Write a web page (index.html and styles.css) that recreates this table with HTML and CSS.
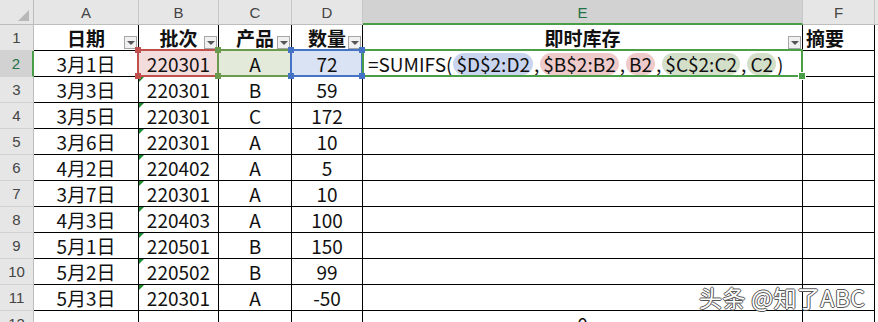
FILE: index.html
```html
<!DOCTYPE html>
<html lang="zh">
<head>
<meta charset="utf-8">
<link rel="stylesheet" href="styles.css">
</head>
<body>
<div class="sheet">
  <!-- column header row -->
  <div class="corner"><span class="corner-tri"></span></div>
  <div class="colh">A</div>
  <div class="colh">B</div>
  <div class="colh">C</div>
  <div class="colh">D</div>
  <div class="colh colh-sel">E</div>
  <div class="colh">F</div>
  <div class="colh colh-rest"></div>

  <!-- row 1 -->
  <div class="rowh">1</div>
  <div class="c hd">日期<span class="dd"></span></div>
  <div class="c hd">批次<span class="dd"></span></div>
  <div class="c hd">产品<span class="dd"></span></div>
  <div class="c hd">数量<span class="dd"></span></div>
  <div class="c hd">即时库存<span class="dd"></span></div>
  <div class="c hd left">摘要</div>
  <div class="c rest"></div>

  <!-- row 2 -->
  <div class="rowh rowh-sel">2</div>
  <div class="c">3月1日</div>
  <div class="c ref ref-red">220301<i class="h tl"></i><i class="h tr"></i><i class="h bl"></i><i class="h br"></i></div>
  <div class="c ref ref-green">A<i class="h tl"></i><i class="h tr"></i><i class="h bl"></i><i class="h br"></i></div>
  <div class="c ref ref-blue">72<i class="h tl"></i><i class="h tr"></i><i class="h bl"></i><i class="h br"></i></div>
  <div class="c edit"><span class="formula">=SUMIFS(<span class="pill p-blue">$D$2:D2</span>,<span class="pill p-red">$B$2:B2</span>,<span class="pill p-red">B2</span>,<span class="pill p-green">$C$2:C2</span>,<span class="pill p-green">C2</span>)</span><i class="fill-handle"></i></div>
  <div class="c"></div>
  <div class="c rest"></div>

  <!-- row 3 -->
  <div class="rowh">3</div>
  <div class="c">3月3日</div>
  <div class="c txt">220301</div>
  <div class="c">B</div>
  <div class="c">59</div>
  <div class="c"></div>
  <div class="c"></div>
  <div class="c rest"></div>

  <div class="rowh">4</div>
  <div class="c">3月5日</div>
  <div class="c txt">220301</div>
  <div class="c">C</div>
  <div class="c">172</div>
  <div class="c"></div>
  <div class="c"></div>
  <div class="c rest"></div>

  <div class="rowh">5</div>
  <div class="c">3月6日</div>
  <div class="c txt">220301</div>
  <div class="c">A</div>
  <div class="c">10</div>
  <div class="c"></div>
  <div class="c"></div>
  <div class="c rest"></div>

  <div class="rowh">6</div>
  <div class="c">4月2日</div>
  <div class="c txt">220402</div>
  <div class="c">A</div>
  <div class="c">5</div>
  <div class="c"></div>
  <div class="c"></div>
  <div class="c rest"></div>

  <div class="rowh">7</div>
  <div class="c">3月7日</div>
  <div class="c txt">220301</div>
  <div class="c">A</div>
  <div class="c">10</div>
  <div class="c"></div>
  <div class="c"></div>
  <div class="c rest"></div>

  <div class="rowh">8</div>
  <div class="c">4月3日</div>
  <div class="c txt">220403</div>
  <div class="c">A</div>
  <div class="c">100</div>
  <div class="c"></div>
  <div class="c"></div>
  <div class="c rest"></div>

  <div class="rowh">9</div>
  <div class="c">5月1日</div>
  <div class="c txt">220501</div>
  <div class="c">B</div>
  <div class="c">150</div>
  <div class="c"></div>
  <div class="c"></div>
  <div class="c rest"></div>

  <div class="rowh">10</div>
  <div class="c">5月2日</div>
  <div class="c txt">220502</div>
  <div class="c">B</div>
  <div class="c">99</div>
  <div class="c"></div>
  <div class="c"></div>
  <div class="c rest"></div>

  <div class="rowh">11</div>
  <div class="c">5月3日</div>
  <div class="c txt">220301</div>
  <div class="c">A</div>
  <div class="c">-50</div>
  <div class="c"></div>
  <div class="c"></div>
  <div class="c rest"></div>

  <div class="rowh">12</div>
  <div class="c"></div>
  <div class="c"></div>
  <div class="c"></div>
  <div class="c"></div>
  <div class="c">0</div>
  <div class="c"></div>
  <div class="c rest"></div>

  <div class="watermark">头条 @知了ABC</div>
</div>
</body>
</html>
```

FILE: styles.css
```css
html, body {
  margin: 0;
  padding: 0;
  background: #fff;
  overflow: hidden;
}
body {
  width: 878px;
  height: 322px;
  font-family: "Noto Sans CJK SC", "Noto Sans", sans-serif;
}
.sheet {
  position: relative;
  display: grid;
  grid-template-columns: 34px 105px 80px 73px 71px 440px 72px 1fr;
  grid-template-rows: 25px repeat(12, 26px);
  width: 878px;
}
.corner {
  position: relative;
  background: #e6e6e6;
  border-right: 1px solid #bdbdbd;
  border-bottom: 1px solid #bdbdbd;
  box-sizing: border-box;
}
.corner-tri {
  position: absolute;
  right: 4px;
  bottom: 3px;
  width: 0;
  height: 0;
  border-left: 11px solid transparent;
  border-bottom: 11px solid #b8b8b8;
}
.colh {
  background: #e6e6e6;
  border-right: 1px solid #c6c6c6;
  border-bottom: 1px solid #bdbdbd;
  box-sizing: border-box;
  display: flex;
  align-items: center;
  justify-content: center;
  font-family: "Liberation Sans", "Noto Sans", sans-serif;
  font-size: 15px;
  color: #444;
  padding-top: 1px;
}
.colh-sel {
  background: #d2d2d2;
  color: #217346;
  border-bottom: 2px solid #4a9e47;
}
.colh-rest {
  border-right: none;
}
.rowh {
  background: #e6e6e6;
  border-right: 1px solid #bdbdbd;
  border-bottom: 1px solid #d2d2d2;
  box-sizing: border-box;
  display: flex;
  align-items: center;
  justify-content: center;
  font-family: "Liberation Sans", "Noto Sans", sans-serif;
  font-size: 15px;
  color: #444;
}
.rowh-sel {
  background: #d2d2d2;
  color: #217346;
  border-right: 2px solid #4a9e47;
}
.c {
  position: relative;
  box-sizing: border-box;
  border-right: 1px solid #000;
  border-bottom: 1px solid #000;
  display: flex;
  align-items: center;
  justify-content: center;
  font-size: 19px;
  color: #111;
  white-space: nowrap;
}
.c.rest {
  border-right: none;
  border-bottom: none;
}
.hd {
  font-weight: bold;
}
.hd.left {
  justify-content: flex-start;
  padding-left: 3px;
}
.dd {
  position: absolute;
  right: 1px;
  bottom: 1px;
  width: 13px;
  height: 13px;
  box-sizing: border-box;
  background: #f0f0f0;
  border: 1px solid #a6a6a6;
}
.dd::after {
  content: "";
  position: absolute;
  left: 2px;
  top: 4px;
  border-left: 4px solid transparent;
  border-right: 4px solid transparent;
  border-top: 4px solid #555;
}
.txt::before {
  content: "";
  position: absolute;
  left: 0;
  top: 0;
  border-top: 5px solid #1f8a2e;
  border-right: 5px solid transparent;
}

/* reference highlights */
.ref::before {
  content: "";
  position: absolute;
  left: -2px;
  top: -2px;
  right: -1px;
  bottom: -1px;
  border: 2px solid var(--rc);
  pointer-events: none;
}
.ref-red { background: #f2dcdc; --rc: #c0504d; }
.ref-green { background: #e3ead9; --rc: #6b9a4c; }
.ref-blue { background: #dae3f3; --rc: #4472c4; }
.h {
  position: absolute;
  width: 6px;
  height: 6px;
  background: var(--rc);
  z-index: 2;
}
.h.tl { left: -4px; top: -4px; }
.h.tr { right: -3px; top: -4px; }
.h.bl { left: -4px; bottom: -3px; }
.h.br { right: -3px; bottom: -3px; }

/* edited cell */
.edit {
  justify-content: flex-start;
  overflow: visible;
}
.edit::before {
  content: "";
  position: absolute;
  left: -1px;
  top: -2px;
  right: -1px;
  bottom: -1px;
  border: 2px solid #4a9e47;
  pointer-events: none;
}
.formula {
  padding-left: 5px;
  display: flex;
  align-items: center;
}
.pill {
  display: inline-block;
  height: 22px;
  line-height: 22px;
  padding: 0 3px;
  border-radius: 11px;
  margin: 0 1px;
}
.p-blue { background: #c9d5ee; }
.p-red { background: #efcaca; }
.p-green { background: #d3dfc9; }
.fill-handle {
  position: absolute;
  right: -4px;
  bottom: -4px;
  width: 6px;
  height: 6px;
  background: #4a9e47;
  border: 1px solid #fff;
  z-index: 3;
}

.watermark {
  position: absolute;
  left: 699px;
  top: 282px;
  font-size: 23px;
  line-height: 30px;
  color: #fff;
  text-shadow: 1px 0 0 #555, -1px 0 0 #555, 0 1px 0 #555, 0 -1px 0 #555;
  letter-spacing: 0.4px;
  white-space: nowrap;
  z-index: 5;
}
```
